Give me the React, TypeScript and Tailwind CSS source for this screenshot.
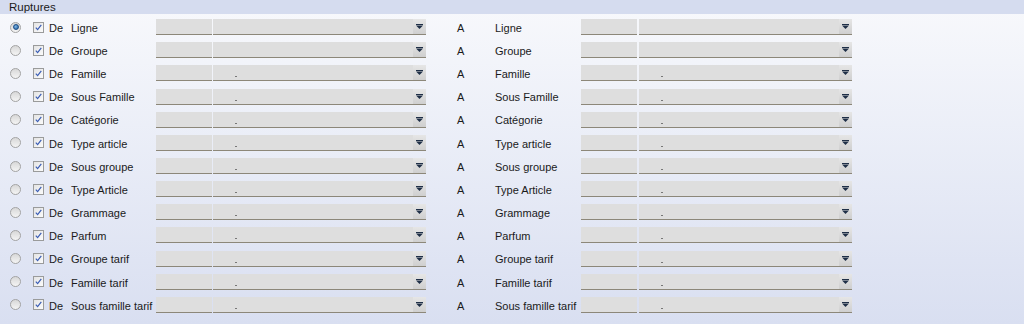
import React from "react";

const rows: [string, string][] = [
  ["Ligne", "Ligne"],
  ["Groupe", "Groupe"],
  ["Famille", "Famille"],
  ["Sous Famille", "Sous Famille"],
  ["Catégorie", "Catégorie"],
  ["Type article", "Type article"],
  ["Sous groupe", "Sous groupe"],
  ["Type Article", "Type Article"],
  ["Grammage", "Grammage"],
  ["Parfum", "Parfum"],
  ["Groupe tarif", "Groupe tarif"],
  ["Famille tarif", "Famille tarif"],
  ["Sous famille tarif", "Sous famille tarif"],
];

const Radio = ({ on }: { on: boolean }) => (
  <div className="w-[11px] h-[11px] rounded-full border border-[#a3a3a3] bg-gradient-to-b from-[#d8d8d8] to-[#f4f4f4] flex items-center justify-center">
    {on && <div className="w-[6px] h-[6px] rounded-full bg-[radial-gradient(circle_at_40%_40%,#7fb6e6,#1d5c9c)] border border-[#1c4e86]" />}
  </div>
);

const Check = () => (
  <div className="w-[11px] h-[11px] border border-[#9a9b9b] bg-gradient-to-br from-[#e4e4e4] to-[#fbfbfb] flex items-center justify-center">
    <svg width="9" height="9" viewBox="0 0 9 9">
      <path d="M1.8 4.6 L3.6 6.6 L7.3 1.8" fill="none" stroke="#3a5db5" strokeWidth="1.2" />
    </svg>
  </div>
);

const Combo = ({ dot, gap }: { dot: boolean; gap: string }) => (
  <div className="flex h-[16px]">
    <div className="w-[56px] h-full bg-[#dedede] border-b border-[#8c8779]" />
    <div className={`${gap} w-[213px] h-full bg-[#dedede] border-b border-[#8c8779] flex relative`}>
      {dot && <div className="absolute left-[22px] bottom-[3px] w-[2px] h-[1px] bg-[#777]" />}
      <div className="flex-1" />
      <div className="w-[13px] h-full bg-gradient-to-b from-[#e6e6e6] to-[#cfcfcf] flex items-center justify-center">
        <svg width="7" height="5" viewBox="0 0 7 5">
          <path d="M0 0h7v1H0z" fill="#1f2f47" />
          <path d="M0 1.5h7L3.5 5z" fill="#1f2f47" />
        </svg>
      </div>
    </div>
  </div>
);

export default function App() {
  return (
    <div className="w-[1024px] h-[324px] bg-gradient-to-b from-[#f8f9fc] to-[#d9dff1] text-[11px] text-[#1a1a1a] font-['Liberation_Sans',Arial,sans-serif] overflow-hidden">
      <div className="h-[14px] bg-[#d5dcef] pl-[9px] leading-[14px] text-[11.5px]">Ruptures</div>
      <div className="pt-[1.5px]">
        {rows.map(([l, r], i) => (
          <div key={l + i} className="h-[23.17px] flex items-center">
            <div className="w-[33px] pl-[10px]"><Radio on={i === 0} /></div>
            <div className="w-[16px]"><Check /></div>
            <div className="w-[22px] pt-[2px]">De</div>
            <div className="w-[85px] pt-[2px] whitespace-nowrap">{l}</div>
            <Combo dot={i > 1} gap="ml-[1px]" />
            <div className="w-[69px] pl-[31px] pt-[2px]">A</div>
            <div className="w-[86px] pt-[2px] whitespace-nowrap">{r}</div>
            <Combo dot={i > 1} gap="ml-[2px]" />
          </div>
        ))}
      </div>
    </div>
  );
}
